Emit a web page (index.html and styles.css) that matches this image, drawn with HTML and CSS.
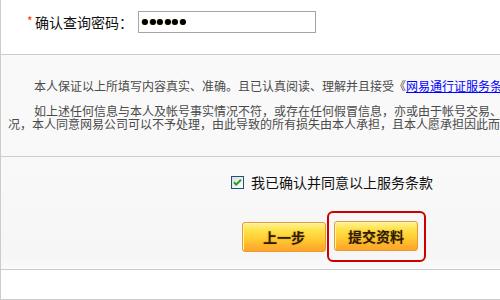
FILE: index.html
```html
<!DOCTYPE html>
<html lang="zh-CN">
<head>
<meta charset="utf-8">
<title>确认提交</title>
<link rel="stylesheet" href="styles.css">
</head>
<body>
<div class="page">
  <div class="sec sec-pwd">
    <div class="pwd-row">
      <span class="req">*</span>
      <span class="label">确认查询密码：</span>
      <div class="pwd-input">
        <i class="dot"></i><i class="dot"></i><i class="dot"></i><i class="dot"></i><i class="dot"></i><i class="dot"></i>
      </div>
    </div>
  </div>
  <div class="sec sec-terms">
    <p class="terms">本人保证以上所填写内容真实、准确。且已认真阅读、理解并且接受《<a href="#" class="link">网易通行证服务条款</a>》。</p>
    <p class="terms">如上述任何信息与本人及帐号事实情况不符，或存在任何假冒信息，亦或由于帐号交易、转让等情况，本人同意网易公司可以不予处理，由此导致的所有损失由本人承担，且本人愿承担因此而起的责任。</p>
  </div>
  <div class="sec sec-confirm">
    <div class="agree-row">
      <span class="cbox">
        <svg width="13" height="13" viewBox="0 0 13 13">
          <defs>
            <linearGradient id="cg" x1="0" y1="0" x2="1" y2="1">
              <stop offset="0" stop-color="#dcdcd6"/>
              <stop offset="1" stop-color="#ffffff"/>
            </linearGradient>
          </defs>
          <rect x="0.5" y="0.5" width="12" height="12" fill="url(#cg)" stroke="#1c5180"/>
          <path d="M3 6.2 L5.2 8.6 L10 3.8" fill="none" stroke="#21a121" stroke-width="2"/>
        </svg>
      </span>
      <span class="agree-text">我已确认并同意以上服务条款</span>
    </div>
    <div class="btn-row">
      <button class="btn" type="button">上一步</button>
      <span class="highlight"><button class="btn" type="button">提交资料</button></span>
    </div>
  </div>
  <div class="sec sec-foot"></div>
</div>
</body>
</html>
```
FILE: styles.css
```css
html, body {
  margin: 0;
  padding: 0;
  background: #ffffff;
  overflow: hidden;
}

.page {
  width: 562px;
  border-left: 1px solid #cccccc;
  font-family: "Noto Sans CJK SC", "Noto Sans", sans-serif;
}

.sec {
  border-bottom: 1px solid #cccccc;
  box-sizing: border-box;
}

.sec-pwd {
  height: 55px;
  background: #ffffff;
  padding-top: 11px;
}

.pwd-row {
  display: flex;
  align-items: center;
  height: 22px;
}

.req {
  color: #ff3300;
  font-size: 12px;
  line-height: 12px;
  margin-left: 26px;
  width: 8px;
  margin-top: -2px;
}

.label {
  font-size: 14px;
  line-height: 16px;
  color: #111111;
}

.pwd-input {
  margin-left: 5px;
  width: 178px;
  height: 22px;
  box-sizing: border-box;
  border: 1px solid #a5a5a5;
  background: #ffffff;
  display: flex;
  align-items: center;
  gap: 1.5px;
  padding-left: 3px;
}

.dot {
  display: block;
  width: 6px;
  height: 6px;
  border-radius: 50%;
  background: #000000;
  box-shadow: -0.5px 0 0 #b89a30;
}

.sec-terms {
  height: 102px;
  background: #f9f9f9;
  padding: 24px 0 0 7px;
}

.terms {
  margin: 0 0 12px;
  width: 554px;
  font-size: 12px;
  line-height: 13px;
  color: #4a4a4a;
  text-indent: 26px;
}

.link {
  color: #0000ff;
  text-decoration: underline;
}

.sec-confirm {
  height: 113px;
  background: linear-gradient(#f9f9f9, #f6f6f6 90%, #fbfbfb);
  padding-top: 18px;
}

.agree-row {
  display: flex;
  align-items: center;
  height: 14px;
  padding-left: 230px;
}

.cbox {
  display: flex;
  width: 13px;
  height: 13px;
}

.agree-text {
  margin-left: 7px;
  font-size: 14px;
  line-height: 14px;
  color: #111111;
}

.btn-row {
  display: flex;
  align-items: center;
  margin-top: 22px;
  padding-left: 241px;
}

.btn {
  width: 84px;
  height: 30px;
  box-sizing: border-box;
  border: 1px solid #e59a35;
  border-radius: 3px;
  background: linear-gradient(#fff29a 0%, #ffe34c 25%, #ffcf34 55%, #ffb02c 85%, #ffa52a 100%);
  box-shadow: inset 1px 1px 0 #fff6b0;
  font-family: "Noto Sans CJK SC", sans-serif;
  font-size: 14px;
  font-weight: bold;
  color: #2a1c00;
  text-shadow: 0 0 2px #d08a20;
  padding: 0;
  margin: 0;
  cursor: pointer;
}

.highlight {
  display: flex;
  margin-left: 1px;
  padding: 8px 6px 9px 5px;
  border: 2px solid #cc0000;
  border-radius: 6px;
}

.sec-foot {
  height: 30px;
  background: #ffffff;
}
```
